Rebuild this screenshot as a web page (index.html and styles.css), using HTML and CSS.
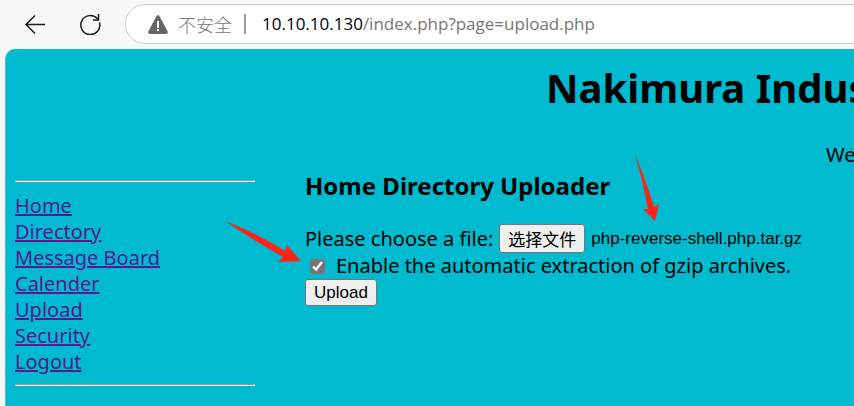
FILE: index.html
```html
<!DOCTYPE html>
<html lang="en">
<head>
<meta charset="utf-8">
<title>Nakimura Industries</title>
<link rel="stylesheet" href="styles.css">
</head>
<body>
<header class="toolbar">
  <button class="tool" type="button" aria-label="Back">
    <svg width="22" height="22" viewBox="0 0 22 22"><path d="M21 11.5H2M11 2.5l-9 9 9 9"/></svg>
  </button>
  <button class="tool" type="button" aria-label="Reload">
    <svg width="22" height="22" viewBox="0 0 22 22"><path d="M20.500 9.500A9.500 9.500 0 1 1 18.500 5.800M19.500 1v6H14"/></svg>
  </button>
  <div class="address">
    <svg class="warning" width="20" height="19" viewBox="0 0 20 19"><path fill="#666" d="M8.600 1Q10-.8 11.400 1L19.700 16.500Q20.200 18.600 18 19H2Q-.2 18.600.3 16.500Z"/><path fill="#fff" d="M9 6h2v7H9zM9 14h2v2H9z"/></svg>
    <span class="unsafe" lang="zh-CN">不安全</span>
    <span class="divider"></span>
    <span class="url"><span class="host">10.10.10.130</span>/index.php?page=upload.php</span>
  </div>
</header>
<div class="page">
  <h1>Nakimura Indus</h1>
  <p class="welcome">We</p>
  <div class="columns">
    <nav class="menu">
      <hr>
      <ul>
        <li><a href="#home">Home</a></li>
        <li><a href="#directory">Directory</a></li>
        <li><a href="#messages">Message Board</a></li>
        <li><a href="#calender">Calender</a></li>
        <li><a href="#upload">Upload</a></li>
        <li><a href="#security">Security</a></li>
        <li><a href="#logout">Logout</a></li>
      </ul>
      <hr>
    </nav>
    <main>
      <h3>Home Directory Uploader</h3>
      <form>
        <div class="file-row">
          <label for="choose">Please choose a file:</label>
          <button id="choose" class="choose" type="button" lang="zh-CN">选择文件</button>
          <span class="filename">php-reverse-shell.php.tar.gz</span>
        </div>
        <div class="check-row">
          <input type="checkbox" id="extract" checked>
          <label for="extract">Enable the automatic extraction of gzip archives.</label>
        </div>
        <button class="submit" type="submit">Upload</button>
      </form>
    </main>
  </div>
</div>
<svg class="arrow arrow-check" width="78" height="44" viewBox="0 0 78 44"><path d="M0 0Q34 13 60 30L62 24L76 40L53 41L58 36Q30 20 0 0Z"/></svg>
<svg class="arrow arrow-file" width="26" height="68" viewBox="0 0 26 68"><path d="M0 0Q10 24 19 53L24 50L20 67L8 55L13 55Q8 28 0 0Z"/></svg>
</body>
</html>
```
FILE: styles.css
```css
* { box-sizing: border-box; }
body {
  margin: 0;
  min-height: 100vh;
  display: flex;
  flex-direction: column;
  overflow: hidden;
  background: #f7f7f7;
  color: #000;
  font: 20px/26px "Noto Sans", "Noto Sans CJK SC", sans-serif;
}
.toolbar {
  display: flex;
  align-items: center;
  padding: 4px 0 5px 24px;
  gap: 33px;
}
.tool {
  display: flex;
  padding: 0;
  border: 0;
  background: none;
}
.tool svg {
  fill: none;
  stroke: #1b1b1b;
  stroke-width: 1.5;
}
.address {
  flex: 1;
  display: flex;
  align-items: center;
  height: 40px;
  margin-left: -9px;
  margin-right: -30px;
  padding-left: 22px;
  border: 1px solid #cfcfcf;
  border-radius: 20px;
  background: #fff;
  color: #767676;
  font-family: "Open Sans", sans-serif;
  font-size: 17px;
  white-space: nowrap;
}
.unsafe {
  margin-left: 10px;
  font-family: "Noto Sans CJK SC", sans-serif;
  font-size: 18px;
  font-weight: 300;
}
.divider {
  width: 2px;
  height: 20px;
  margin: 0 16px 0 12px;
  background: #999;
}
.host { color: #000; }
.page {
  flex: 1;
  margin-left: 5px;
  padding: 10px 0 10px 9px;
  border-left: 1px solid #3dc3d3;
  border-radius: 10px 0 0 0;
  background: #00bacf;
  overflow: hidden;
  white-space: nowrap;
}
h1 {
  margin: 0 0 25px 531px;
  font-size: 40px;
  line-height: 58px;
}
.welcome { margin: 0 0 0 811px; }
.columns {
  display: flex;
  gap: 50px;
}
.menu {
  width: 240px;
  padding-top: 12px;
}
.menu hr {
  margin: 0;
  border: 1px solid;
  border-color: #9a9a9a #eee #eee #9a9a9a;
}
.menu ul {
  margin: 11px 0 9px;
  padding: 0;
  list-style: none;
}
.menu a { color: #551a8b; }
main { padding-top: 3px; }
h3 {
  margin: 0 0 23px;
  font-size: 24px;
  line-height: 30px;
}
.file-row {
  display: flex;
  align-items: center;
  gap: 6px;
}
.choose, .submit {
  border: 1px solid #767676;
  border-radius: 3px;
  background: #efefef;
  color: #000;
  font-family: "Liberation Sans", "Noto Sans CJK SC", sans-serif;
}
.choose {
  height: 29px;
  padding: 0 8px;
  font-size: 17px;
}
.filename { font: 17px/26px "Liberation Sans", sans-serif; }
.check-row {
  display: flex;
  align-items: center;
  gap: 11px;
}
.check-row input {
  width: 15px;
  height: 15px;
  margin: 0 0 0 5px;
  accent-color: #767676;
}
.submit {
  display: block;
  height: 27px;
  padding: 0 8px;
  font-size: 17px;
}
.arrow {
  position: absolute;
  fill: #ff2317;
}
.arrow-check { left: 225px; top: 221px; }
.arrow-file { left: 635px; top: 154px; }
```
